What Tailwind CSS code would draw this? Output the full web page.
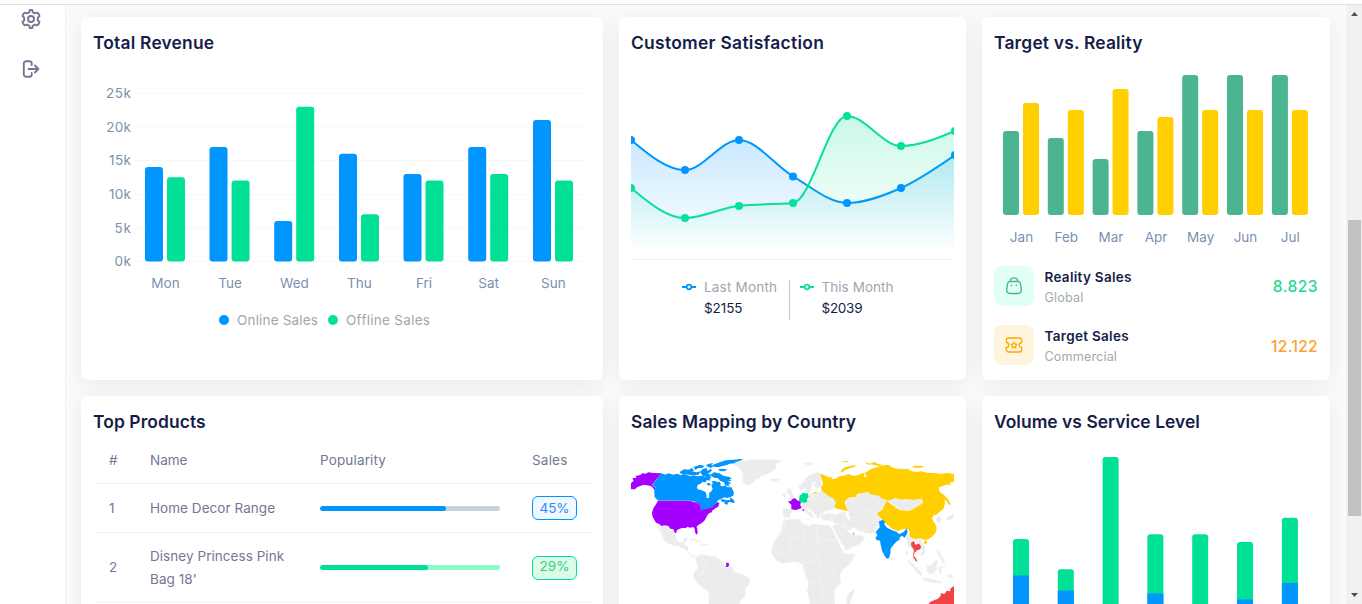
<!DOCTYPE html>
<html lang="en">
<head>
<meta charset="utf-8">
<title>Dashboard</title>
<script src="https://cdn.jsdelivr.net/npm/@tailwindcss/browser@4"></script>
</head>
<body class="h-[604px] overflow-hidden bg-white font-['Inter','Liberation_Sans',sans-serif] text-[13.5px]">
<div class="flex h-[604px] flex-col">
<header class="h-[5px] shrink-0 border-b border-[#e0e0e0] bg-white"></header>
<div class="flex min-h-0 flex-1">
  <aside class="flex w-[66px] shrink-0 flex-col items-center gap-[30px] border-r border-[#eff1f3] bg-white pt-1 pr-[3px] text-[#737791]">
    <svg class="h-5 w-5 shrink-0" viewBox="0 0 20 20" fill="none" stroke="currentColor" stroke-width="1.9" stroke-linejoin="round"><path d="M8.300 3.200 8.800 .9h2.400l.5 2.300 2 1.150 2.250-.75 1.750 1.400.8 2-1.700 1.700v2.600l1.700 1.700-.8 2-1.750 1.400-2.250-.75-2 1.150-.5 2.300H8.800l-.5-2.300-2-1.150-2.250.75L2.300 15l-.8-2 1.700-1.700V8.700L1.500 7l.8-2 1.750-1.400 2.250.75z"/><circle cx="10" cy="10" r="3"/></svg>
    <svg class="h-5 w-5 shrink-0" viewBox="0 0 20 20" fill="none" stroke="currentColor" stroke-width="1.900" stroke-linecap="round" stroke-linejoin="round"><path d="M10.700 6V4.500A2.300 2.300 0 0 0 8.400 2.200H5.100A2.300 2.300 0 0 0 2.800 4.500v11a2.300 2.300 0 0 0 2.300 2.300h3.300a2.300 2.300 0 0 0 2.300-2.300V14M7.500 10h9.500M13.900 6.500 17.400 10l-3.500 3.500"/></svg>
  </aside>
  <main class="grid min-w-0 flex-1 grid-cols-[522px_347px_348px] grid-rows-[363px_363px] gap-4 overflow-hidden bg-[#f9fafc] pt-3 pl-[15px]">

    <section class="rounded-md bg-white px-3 pt-3 shadow-[0_4px_20px_rgba(0,0,0,0.065)]">
      <h2 class="text-[17.4px] leading-7 font-semibold tracking-[0.2px] text-[#151d48]">Total Revenue</h2>
      <svg class="block" width="498" height="280" viewBox="93 57 498 280">
        <g stroke="#f8f8f9"><path d="M135 93.500h451M135 126.500h451M135 160.500h451M135 194.500h451M135 227.500h451M135 261.500h451"/></g>
        <g fill="#7b91b0"><text x="106" y="98" textLength="25">25k</text><text x="106.300" y="132" textLength="24.700">20k</text><text x="109" y="165" textLength="22">15k</text><text x="109" y="199" textLength="22">10k</text><text x="114.500" y="233" textLength="16.500">5k</text><text x="114.500" y="266" textLength="16.500">0k</text></g>
        <g fill="#0095ff"><rect x="145" y="167" width="18" height="94.500" rx="3"/><rect x="209.500" y="147" width="18" height="114.500" rx="3"/><rect x="274.200" y="221" width="18" height="40.500" rx="3"/><rect x="339" y="153.700" width="18" height="107.800" rx="3"/><rect x="403.500" y="174" width="18" height="87.500" rx="3"/><rect x="468.200" y="147" width="18" height="114.500" rx="3"/><rect x="533" y="120" width="18" height="141.500" rx="3"/></g>
        <g fill="#00e096"><rect x="167" y="177.300" width="18" height="84.200" rx="3"/><rect x="231.600" y="180.600" width="18" height="80.900" rx="3"/><rect x="296.200" y="106.700" width="18" height="154.800" rx="3"/><rect x="361" y="214.200" width="18" height="47.300" rx="3"/><rect x="425.500" y="180.600" width="18" height="80.900" rx="3"/><rect x="490.200" y="174" width="18" height="87.500" rx="3"/><rect x="555" y="180.600" width="18" height="80.900" rx="3"/></g>
        <g fill="#7b91b0" text-anchor="middle"><text x="165.500" y="288">Mon</text><text x="230" y="288">Tue</text><text x="294.500" y="288">Wed</text><text x="359.300" y="288">Thu</text><text x="424" y="288">Fri</text><text x="488.700" y="288">Sat</text><text x="553.300" y="288">Sun</text></g>
        <circle cx="224" cy="320" r="5" fill="#0095ff"/><circle cx="333" cy="320" r="5" fill="#00e096"/>
        <g fill="#a5a3ae"><text x="237" y="325" textLength="81">Online Sales</text><text x="346" y="325" textLength="84">Offline Sales</text></g>
      </svg>
    </section>

    <section class="rounded-md bg-white px-3 pt-3 shadow-[0_4px_20px_rgba(0,0,0,0.065)]">
      <h2 class="text-[17.4px] leading-7 font-semibold tracking-[0.3px] text-[#151d48]">Customer Satisfaction</h2>
      <svg class="block" width="323" height="280" viewBox="631 57 323 280">
        <defs>
          <linearGradient id="lastFill" gradientUnits="userSpaceOnUse" x1="0" y1="140" x2="0" y2="252"><stop offset="0" stop-color="#0095ff" stop-opacity=".21"/><stop offset="1" stop-color="#0095ff" stop-opacity="0"/></linearGradient>
          <linearGradient id="thisFill" gradientUnits="userSpaceOnUse" x1="0" y1="116" x2="0" y2="252"><stop offset="0" stop-color="#07e098" stop-opacity=".21"/><stop offset="1" stop-color="#07e098" stop-opacity="0"/></linearGradient>
        </defs>
        <path fill="url(#lastFill)" d="M631 140C649 155 667 170 685 170S721 140 739 140 775 165.800 793 176.300 829 203 847 203 883 196 901 188 937 167.500 955 155V254H631z"/>
        <path fill="none" stroke="#0095ff" stroke-width="2" d="M631 140C649 155 667 170 685 170S721 140 739 140 775 165.800 793 176.300 829 203 847 203 883 196 901 188 937 167.500 955 155"/>
        <path fill="url(#thisFill)" d="M631 188C649 203 667 218 685 218S721 207.500 739 205.700 775 204.800 793 203 829 116 847 116 883 146 901 146 937 138.500 955 131V254H631z"/>
        <path fill="none" stroke="#07e098" stroke-width="2" d="M631 188C649 203 667 218 685 218S721 207.500 739 205.700 775 204.800 793 203 829 116 847 116 883 146 901 146 937 138.500 955 131"/>
        <g fill="#0095ff"><circle cx="631" cy="140" r="4"/><circle cx="685" cy="170" r="4"/><circle cx="739" cy="140" r="4"/><circle cx="793" cy="176.500" r="4"/><circle cx="847" cy="203" r="4"/><circle cx="901" cy="188" r="4"/><circle cx="955" cy="155" r="4"/></g>
        <g fill="#07e098"><circle cx="631" cy="188" r="4"/><circle cx="685" cy="218" r="4"/><circle cx="739" cy="206" r="4"/><circle cx="793" cy="203" r="4"/><circle cx="847" cy="116" r="4"/><circle cx="901" cy="146" r="4"/><circle cx="955" cy="131" r="4"/></g>
        <path d="M631 259.500h323" stroke="#edf2f7"/>
        <g fill="#fff" stroke-width="2"><path d="M682 287h14" stroke="#0095ff"/><circle cx="689" cy="287" r="2.300" stroke="#0095ff" stroke-width="1.700"/><path d="M800 287h14" stroke="#07e098"/><circle cx="807" cy="287" r="2.300" stroke="#07e098" stroke-width="1.700"/></g>
        <path d="M789.500 280v40" stroke="#bdcad3"/>
        <g fill="#a5a3ae"><text x="704" y="292" textLength="73">Last Month</text><text x="821.500" y="292" textLength="72">This Month</text></g>
        <g fill="#151d48"><text x="704" y="313" textLength="38.500">$2155</text><text x="821.500" y="313" textLength="41">$2039</text></g>
      </svg>
    </section>

    <section class="rounded-md bg-white px-3 pt-3 shadow-[0_4px_20px_rgba(0,0,0,0.065)]">
      <h2 class="text-[17.4px] leading-7 font-semibold tracking-[0.2px] text-[#151d48]">Target vs. Reality</h2>
      <svg class="block" width="324" height="196" viewBox="994 57 324 196">
        <g fill="#4ab58e"><rect x="1003" y="131" width="16" height="84" rx="3"/><rect x="1047.800" y="138" width="16" height="77" rx="3"/><rect x="1092.600" y="159" width="16" height="56" rx="3"/><rect x="1137.400" y="131" width="16" height="84" rx="3"/><rect x="1182.200" y="75" width="16" height="140" rx="3"/><rect x="1227" y="75" width="16" height="140" rx="3"/><rect x="1271.900" y="75" width="16" height="140" rx="3"/></g>
        <g fill="#ffcf00"><rect x="1023" y="103" width="16" height="112" rx="3"/><rect x="1067.800" y="110" width="16" height="105" rx="3"/><rect x="1112.600" y="89" width="16" height="126" rx="3"/><rect x="1157.400" y="117" width="16" height="98" rx="3"/><rect x="1202.200" y="110" width="16" height="105" rx="3"/><rect x="1247" y="110" width="16" height="105" rx="3"/><rect x="1291.900" y="110" width="16" height="105" rx="3"/></g>
        <g fill="#7b91b0" text-anchor="middle"><text x="1021.500" y="242">Jan</text><text x="1066.300" y="242">Feb</text><text x="1111" y="242">Mar</text><text x="1156" y="242">Apr</text><text x="1200.700" y="242">May</text><text x="1245.500" y="242">Jun</text><text x="1290.300" y="242">Jul</text></g>
      </svg>
      <div class="mt-[13px] flex h-10 items-center">
        <div class="flex h-10 w-10 items-center justify-center rounded-lg bg-[#e2fff3]">
          <svg width="20" height="20" viewBox="0 0 20 20" fill="none" stroke="#4ab58e" stroke-width="1.400" stroke-linecap="round"><path d="M6 5.500h8c1.300 0 2.100.8 2.400 2l.9 5.800c.3 2.700-1 4.200-3.300 4.200H6c-2.300 0-3.600-1.500-3.300-4.200l.9-5.800c.3-1.200 1.100-2 2.400-2zM6 5.200C7 .8 13 .8 14 5.200"/><path d="M7.500 9.300v.1M12.500 9.300v.1" stroke-width="1.600"/></svg>
        </div>
        <div class="ml-[10.5px] flex-1 pt-0.5"><p class="leading-5 font-semibold tracking-[0.3px] text-[#151d48]">Reality Sales</p><p class="text-[12.6px] leading-[21px] tracking-[0.15px] text-[#a1aba5]">Global</p></div>
        <span class="pt-0.5 text-[15.6px] font-medium tracking-[0.45px] text-[#27d88f]">8.823</span>
      </div>
      <div class="mt-[19px] flex h-10 items-center">
        <div class="flex h-10 w-10 items-center justify-center rounded-lg bg-[#fff4de]">
          <svg width="20" height="20" viewBox="0 0 20 20" fill="none" stroke="#ffa800" stroke-width="1.300" stroke-linejoin="round"><path d="M2.300 7.500V5.300c0-1.300 1-2.300 2.300-2.300h10.800c1.300 0 2.300 1 2.300 2.300v2.200a2.500 2.500 0 0 0 0 5v2.200c0 1.300-1 2.300-2.300 2.300H4.600a2.300 2.300 0 0 1-2.300-2.300v-2.200a2.500 2.500 0 0 0 0-5z"/><path d="m10 7.200 1 1.800 1.900.4-1.300 1.500.2 2L10 12.200l-1.800.7.2-2-1.300-1.500L9 9z"/></svg>
        </div>
        <div class="ml-[10.5px] flex-1 pt-0.5"><p class="leading-5 font-semibold tracking-[0.3px] text-[#151d48]">Target Sales</p><p class="text-[12.6px] leading-[21px] tracking-[0.15px] text-[#a1aba5]">Commercial</p></div>
        <span class="pt-1 text-[15.6px] font-medium tracking-[0.3px] text-[#ff9f2e]">12.122</span>
      </div>
    </section>

    <section class="rounded-md bg-white px-3 pt-3 shadow-[0_4px_20px_rgba(0,0,0,0.065)]">
      <h2 class="text-[17.4px] leading-7 font-semibold tracking-[0.1px] text-[#151d48]">Top Products</h2>
      <div class="w-[499px] leading-[23px] text-[#737791]">
        <div class="grid h-[48px] grid-cols-[57px_170px_212px_60px] items-center border-b border-[#edf6fd] pt-px"><span class="pl-4">#</span><span>Name</span><span class="tracking-[0.15px]">Popularity</span><span class="tracking-[0.2px]">Sales</span></div>
        <div class="grid h-[49px] grid-cols-[57px_170px_212px_60px] items-center border-b border-[#edf6fd]"><span class="pl-4">1</span><span class="tracking-[0.05px]">Home Decor Range</span><div class="h-[5px] w-[180px] overflow-hidden rounded-full bg-[#c5d3e2]"><div class="h-full w-[126px] rounded-full bg-[#0095ff]"></div></div><span class="flex h-6 w-[45px] items-center justify-center rounded-md border border-[#0095ff] bg-[#f0f9ff] text-[#2f8bf6]">45%</span></div>
        <div class="grid h-[70px] grid-cols-[57px_170px_212px_60px] items-center border-b border-[#edf6fd]"><span class="pl-4">2</span><span class="tracking-[0.05px]">Disney Princess Pink<br>Bag 18'</span><div class="h-[5px] w-[180px] overflow-hidden rounded-full bg-[#8cfac7]"><div class="h-full w-[108px] rounded-full bg-[#00e096]"></div></div><span class="flex h-6 w-[45px] items-center justify-center rounded-md border border-[#00e096] bg-[#dcfce7] pb-0.5 text-[#36cf86]">29%</span></div>
      </div>
    </section>

    <section class="rounded-md bg-white px-3 pt-3 shadow-[0_4px_20px_rgba(0,0,0,0.065)]">
      <h2 class="text-[17.4px] leading-7 font-semibold tracking-[0.15px] text-[#151d48]">Sales Mapping by Country</h2>
      <svg class="block" width="323" height="168" viewBox="631 436 323 168" stroke-linejoin="round">
        <!-- Americas and Greenland -->
        <g transform="translate(625 450) scale(.33333)" stroke-width="1.500">
          <g fill="#ececec" stroke="#fff">
            <path d="M322 40L336 35 350 32 368 31 380 27 406 29 426 27 450 29 474 30 464 38 452 42 456 50 448 58 445 64 433 68 425 74 410 78 402 86 390 90 386 98 378 102 372 109 364 103 358 101 352 93 356 87 350 81 354 73 348 59 336 49z"/>
            <path d="M436 87l8-3 6 2 12-3 3 6-9 5-8 2-5-3-6 1z"/>
            <path d="M94 220L108 226 118 226 130 230 136 240 145 242 152 254 154 268 160 275 168 278 174 275 176 266 188 262 186 271 182 276 176 282 184 286 191 294 190 304 197 314 203 316 213 319 221 317 219 327 211 323 201 320 191 313 188 306 176 296 166 293 158 288 146 289 134 282 120 275 112 258 104 242z"/>
            <path d="M93 221L99 233 105 247 110 261 114 264 109 250 103 238 101 224z"/>
            <path d="M190 268l14-4 12 5 16 8-10 1-10-6-12-1zM228 283l8-3 14 3 4 3-12 1-14-1zM262 284h8v2h-8z"/>
            <path d="M210 326L224 316 233 310 238 316 246 314 256 318 270 316 278 324 290 332 300 342 308 348 318 347 324 356 326 364 338 368 350 373 362 376 374 386 376 396 370 406 362 414 362 428 360 440 350 448 344 460 332 470H250L252 436 248 424 234 416 220 402 208 388 204 378 208 366 216 358 217 344z"/>
            <path fill="none" stroke="#f8f8f8" d="M232 314l2 16 12 6 0 16-12 4-4 14-14 6M272 318l-2 14 10 12 14-2M230 370l18 6 8 12 16 8 4 16-16 18-10 2M276 412l12 10 8 14 10 6 2 14"/>
            <path d="M484 124l4-8 8-2 2 10 6 8 4 8-4 8-12 2 2-10-4-6zM473 130l8-2 2 8-6 6-6-4z"/>
          </g>
          <path fill="#a500ff" d="M18 99L26 93 22 85 34 83 32 78 46 75 52 70 62 71 70 67 86 69 110 70 81 104 89 112 95 119 97 129 92 125 86 116 78 108 66 106 56 104 46 108 36 112 30 118 18 118z"/>
          <g fill="#0095ff">
            <path d="M110 70L120 74 130 70 146 74 156 71 166 75 180 73 196 79 206 76 218 79 232 77 240 82 250 78 260 82 254 86 256 92 246 90 242 97 232 96 226 102 218 104 216 112 218 118 230 121 242 126 245 138 244 144 251 144 253 138 252 130 259 124 263 116 259 106 263 102 261 94 269 93 279 97 283 94 287 101 287 108 295 109 302 106 307 112 320 112 322 118 326 126 326 136 318 140 306 144 300 142 288 146 278 152 274 160 280 156 284 162 276 166 262 170 250 176 238 179 228 182V170L223 162 218 157 196 152H104L95 138 90 124 91 112 82 104z"/>
            <path d="M165 65l12-7 14 1 9-5 8 7-7 3 14 3 12-3-6 10-22 2-16-3-6 2-12-6zM205 52l20-8 14 4-6 5-14 2-8 4zM225 66l8-9 12-3 3 9 9-7 4 6-12 9 8 3 10-7 16 3 12 7 18 4 8 5-8 2 8 6-14-2 12 8-9 3 5 7-15-5-3-8-11-4-7-8-12-2-8-5-9 4-16-3zM243 45l10-4 12-2-6 6 6 6-8 2-8-2zM262 45l18-7 22-7 24-2 30-3-12 7-16 4 6 2-20 2-10 5-12 2-10 3-10 0-9-2zM280 58l14-2 14 3-10 5-14-1zM244 101l8-3 6 6-7 3zM286 148l10 0 8 3 12-2-2-8 12 8 4 9-9 0-5-3-6 2-4 8-9-5 4-5-9 1z"/>
            <path d="M87 118L93 130 99 144 104 152 98 151 89 141z"/>
          </g>
          <path fill="#a500ff" d="M99 152H196L206 156 219 157 227 165 229 173 230 181 240 178 252 175 262 170 270 164 278 157 282 160 280 170 272 174 266 179 260 182 262 186 252 190 246 197 242 206 238 212 230 219 219 226 215 230 217 238 218 250 214 254 210 246 209 236 205 231 195 233 187 230 183 234 171 234 163 237 156 240 154 248 149 248 145 238 136 236 130 228 118 226 110 228 101 221 93 218 88 210 82 198 81 188 85 175 92 164z"/>
          <path d="M104 152H196L218 160 227 168 229 183" fill="none" stroke="#83bfff" stroke-width="1.300"/>
          <path d="M303 338l7 0 3 6-4 7-7-1 2-5z" fill="#a500ff"/>
        </g>
        <!-- Europe, Africa, Asia and Oceania -->
        <g transform="translate(780 450) scale(.33333)" stroke-width="1.500">
          <g fill="#ececec" stroke="#fff">
            <path d="M54 112L56 105 66 100 72 92 78 83 88 75 98 70 110 66 120 68 124 78 126 96 124 110 114 115 105 112 101 106 107 94 101 96 96 102 95 114 90 128 84 130 80 122 74 116 64 121zM66 40l20-4 18 3-8 6-18 0z"/>
            <path d="M19 124l6-9 8 1 2 10 6 8 3 8-6 6-12 0 4-9-4-7zM8 130l9-2 2 9-7 5-6-3zM8 175h24l6 6-5 8-3 12-7 3-10-1-5-7z"/>
            <path d="M86 132L104 126 118 126 126 120 136 130 160 138 166 148 170 166 164 178 156 180 148 182 138 183 130 189 134 200 128 202 122 196 116 204 112 207 106 195 98 185 92 180 86 178 78 176 66 174 64 158 82 154 86 144z"/>
            <path d="M66 175l14-3 4 10 10 6 7 10-8 8-2-6-8-8-10-9-6-1zM78 206h10l-1 5zM122 193L136 193 150 188 166 193 188 198 186 212 168 212 156 214 136 212 124 206z"/>
            <path d="M150 206L170 192 188 186 204 182 196 168 198 148 222 142 234 134 262 126 290 134 325 150 311 172 292 190 305 208 288 238 290 254 278 251 260 250 246 245 234 243 224 233 218 232 212 242 200 239 188 225 184 227 168 225z"/>
            <path d="M10 210L30 207 58 206 62 212 68 222 82 225 90 228 94 220 106 221 122 225 144 224 152 230 160 244 168 260 176 276 182 290 192 306 200 312 222 309 226 313 218 331 206 347 194 355 186 365 180 377 184 399 172 411 164 423 166 463H88L86 441 80 423 84 411 84 393 76 381 76 369 70 363 68 343 52 337 36 337 10 341-6 335-20 321-26 309-24 291-20 277-8 261 2 247z"/>
            <path d="M157 228L167 222 175 221 189 229 201 237 209 249 219 251 229 255 241 253 253 261 249 275 235 285 215 293 201 303 195 299 191 287 181 277 173 261 165 245z"/>
            <path d="M376 262L388 248 394 254 398 266 395 276 399 288 400 304 394 294 386 294 382 280zM404 268L416 263 428 265 424 275 436 291 437 307 425 319 419 313 427 304 420 290 411 284zM384 330L392 334 404 346 418 358 426 370 425 380 417 374 407 364 399 352 389 342zM426 382L442 385 460 387 474 393 486 395 484 401 470 399 450 397 432 393zM440 348L452 346 460 338 468 329 476 335 470 347 472 355 466 365 460 373 448 373 440 363zM476 350L492 347 500 345 496 351 484 354 486 366 482 376 476 364zM470 300L478 302 482 314 492 326 496 342 486 340 482 326 474 318zM466 206L480 196 486 210 478 220 472 218zM496 212L504 198 516 194 522 184V200L514 210 502 212zM500 376L516 372 522 380 516 384 502 384zM334 322l6 6-2 8-6-6z"/>
            <path d="M199 464V444L205 430 215 422 222 415 223 428 215 448 209 464z"/>
          </g>
          <path fill="none" stroke="#f8f8f8" d="M12 212l4 18-20 14M62 214l0 18 10 10-2 22-44 0-28-22M110 222l2 46 12 2 44 0M70 266l8 34-10 14M112 268l-6 42 14 18-2 20M160 300l14 8 20 2M70 342l44-14 12 22 30-8M84 374l30-6 10 34-40 0M156 342l8 48-20 14-18-2 2 50M30 266l4 32-18 12-30-2M40 336l0-24 26 0M205 210l28 10 14 28M250 190l20 20 20 4M210 150l28 30 40 4 10 12M100 132l0 28 34 20M134 152l26-4M190 204l10 34M200 280l30-20"/>
          <path fill="#fff" d="M198 177l10 12-1 9 7 6-8 5-8-10-2-12z"/>
          <g fill="#ffcf00">
            <path d="M120 72L132 75 146 82 157 82 154 88 166 86 178 79 192 77 206 72 214 76 226 77 244 71 255 68 251 79 260 81 255 68 266 62 274 57 290 52 308 46 326 45 340 54 362 57 384 57 396 64 410 66 424 64 440 68 462 69 484 72 500 69 522 72V95L510 98 512 104 498 104 488 108 478 112 476 120 488 134 495 150 494 166 490 178 478 186 470 194 456 196 448 188 458 174 450 160 434 150 416 148 400 150 378 148 364 150 346 145 326 152 308 146 292 136 276 134 262 126 246 130 232 132 226 142 212 142 202 146 194 156 198 170 204 184 190 180 170 176 164 170 168 156 158 144 146 138 136 130 126 124 123 112 130 102 126 90z"/>
            <path d="M182 64l6-8 8-5 16-3 18-4-8 7-14 4-14 6-8 8zM268 42l14-6 12 6 14 2-10 4zM180 36l20-3 10 2-14 2zM396 48l16-1 24 2-12 4-22 0zM102 126l8 0 0 4-8 0zM485 130L493 136 503 146 513 164 507 164 499 152 487 142zM252 37l20 4-6 4z"/>
            <path d="M321 152L332 162 346 172 360 181 388 182 404 174 430 158 422 142 436 145 450 156 462 174 470 186 458 200 456 206 466 222 470 236 466 250 456 260 446 267 434 270 420 264 410 266 398 266 390 258 388 244 382 236 370 237 352 243 336 236 320 222 308 210 293 194 292 190 308 178 311 170z"/>
            <path d="M433 273l6-2 2 8-6 4-4-4z"/>
          </g>
          <path fill="#ececec" d="M328 154L344 146 358 150 378 148 398 150 412 148 430 156 422 164 410 170 398 178 386 181 362 179 344 169z"/>
          <path d="M430 158L422 136 440 139 460 160 476 160" fill="none" stroke="#f5dc5c"/>
          <path fill="#a500ff" d="M24 154L33 153 36 148 45 144 51 151 63 155 61 165 65 174 57 177 48 180 34 178V164L28 159zM68 178h4v5h-4z"/>
          <path fill="#00e096" d="M59 135l5-1 3-6 8 2 8 0 3 10-5 8 1 8-9 2-12-1-4-6 1-8zM218 248l4 0 2 5-4 0z"/>
          <path fill="#0095ff" d="M297 214L308 210 315 214 313 223 321 233 335 240 351 246 357 253 371 246 380 235 383 247 378 257 374 263 366 257 358 263 360 268 348 276 338 288 332 296 331 310 327 325 321 326 314 318 306 302 302 284 300 272 290 270 286 263 292 257 288 245 299 232z"/>
          <path d="M379 304l2 8M386 332v4" stroke="#a4d4f7" stroke-width="2"/>
          <path fill="#f04343" d="M394 277L402 273 406 284 418 281 424 292 420 298 408 302 409 308 404 304 402 318 407 324 413 335 407 333 400 322 400 310 402 300 393 286zM446 462L450 456 464 450 474 446 482 438V430L494 432 500 422 510 424 512 415 522 408V470z"/>
        </g>
      </svg>
    </section>

    <section class="rounded-md bg-white px-3 pt-3 shadow-[0_4px_20px_rgba(0,0,0,0.065)]">
      <h2 class="text-[17.4px] leading-7 font-semibold tracking-[0.05px] text-[#151d48]">Volume vs Service Level</h2>
      <svg class="block" width="324" height="168" viewBox="994 436 324 168">
        <g fill="#00e096"><rect x="1013" y="539" width="16" height="90" rx="3"/><rect x="1057.800" y="569.300" width="16" height="60" rx="3"/><rect x="1102.600" y="457" width="16" height="170" rx="3"/><rect x="1147.400" y="534.300" width="16" height="90" rx="3"/><rect x="1192.200" y="534.300" width="16" height="90" rx="3"/><rect x="1237" y="542" width="16" height="90" rx="3"/><rect x="1281.900" y="517.700" width="16" height="110" rx="3"/></g>
        <g fill="#0095ff"><rect x="1013" y="575.500" width="16" height="40"/><rect x="1057.800" y="590.500" width="16" height="30"/><rect x="1147.400" y="593.500" width="16" height="30"/><rect x="1237" y="599.500" width="16" height="30"/><rect x="1281.900" y="583" width="16" height="30"/></g>
      </svg>
    </section>
  </main>
  <!-- page scrollbar -->
  <div class="flex w-4 shrink-0 flex-col items-center justify-between bg-[#f1f1f1] pt-[7px] pb-[7px]">
    <svg width="7" height="4" viewBox="0 0 7 4"><path d="M0 4 3.500 0 7 4z" fill="#505050"/></svg>
    <div class="mt-[127px] h-[296px] w-[13px] bg-[#c1c1c1]"></div>
    <svg width="7" height="4" viewBox="0 0 7 4"><path d="M0 0 3.500 4 7 0z" fill="#505050"/></svg>
  </div>
</div>
</div>
</body>
</html>
